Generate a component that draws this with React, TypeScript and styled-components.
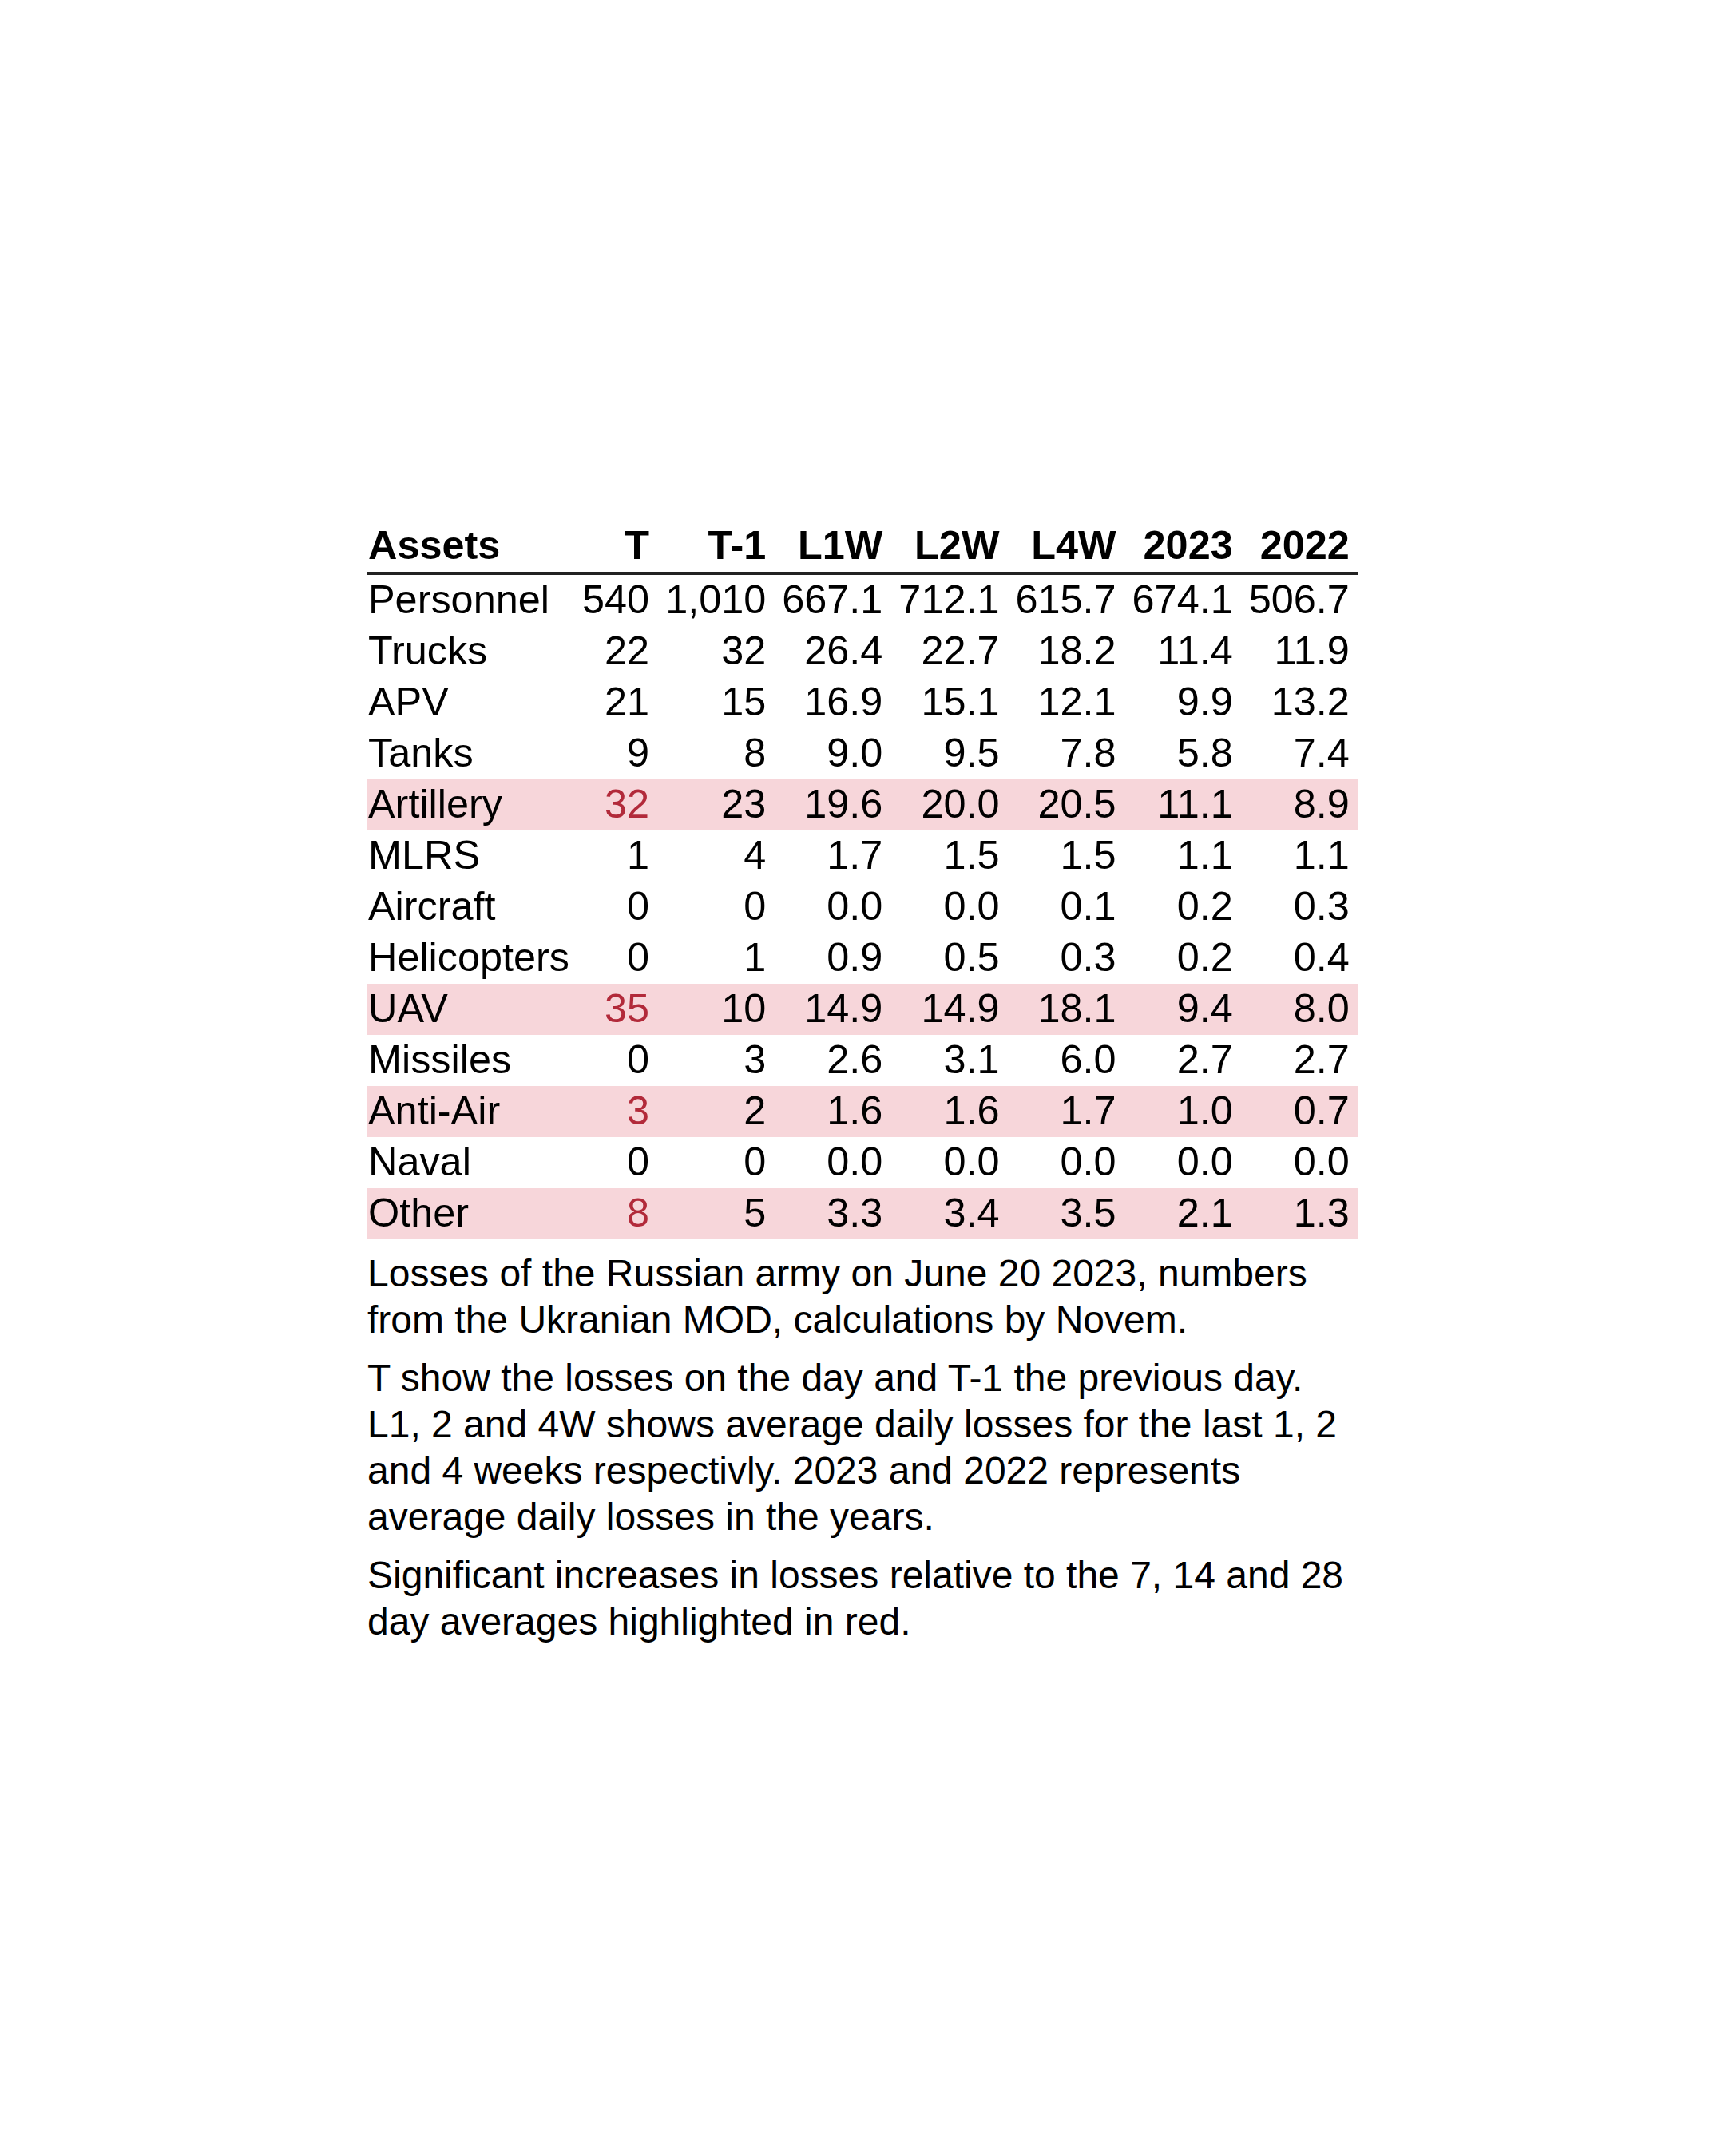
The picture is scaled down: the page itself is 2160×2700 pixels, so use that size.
import styled, { createGlobalStyle } from "styled-components";

const GlobalStyle = createGlobalStyle`
  html, body {
    margin: 0;
    padding: 0;
    background: #ffffff;
  }
  body {
    font-family: "Liberation Sans", Arial, sans-serif;
    color: #000000;
  }
`;

const Wrapper = styled.div`
  padding: 652px 0 0 460px;
  width: 1240px;
`;

const Table = styled.table`
  border-collapse: separate;
  border-spacing: 0;
  font-size: 50.4px;
`;

const HeadCell = styled.th<{ $first?: boolean }>`
  font-weight: 700;
  line-height: 61px;
  padding: 0 ${(p) => (p.$first ? "6px 3px 1px" : "10px 3px 10px")};
  text-align: ${(p) => (p.$first ? "left" : "right")};
  border-bottom: 4px solid #222222;
  white-space: nowrap;
`;

const Row = styled.tr<{ $hot?: boolean }>`
  background: ${(p) => (p.$hot ? "#f7d6da" : "transparent")};
`;

const Cell = styled.td<{ $first?: boolean; $red?: boolean }>`
  line-height: 61px;
  padding: 0 ${(p) => (p.$first ? "6px 3px 1px" : "10px 3px 10px")};
  text-align: ${(p) => (p.$first ? "left" : "right")};
  color: ${(p) => (p.$red ? "#b22a3a" : "#000000")};
  white-space: nowrap;
`;

const Notes = styled.div`
  padding-top: 14px;
  width: 1240px;
`;

const Note = styled.p`
  margin: 0 0 15px;
  font-size: 48px;
  line-height: 58px;
`;

type Asset = {
  name: string;
  values: string[];
  hot?: boolean;
};

const columns = ["T", "T-1", "L1W", "L2W", "L4W", "2023", "2022"];

const assets: Asset[] = [
  { name: "Personnel", values: ["540", "1,010", "667.1", "712.1", "615.7", "674.1", "506.7"] },
  { name: "Trucks", values: ["22", "32", "26.4", "22.7", "18.2", "11.4", "11.9"] },
  { name: "APV", values: ["21", "15", "16.9", "15.1", "12.1", "9.9", "13.2"] },
  { name: "Tanks", values: ["9", "8", "9.0", "9.5", "7.8", "5.8", "7.4"] },
  { name: "Artillery", values: ["32", "23", "19.6", "20.0", "20.5", "11.1", "8.9"], hot: true },
  { name: "MLRS", values: ["1", "4", "1.7", "1.5", "1.5", "1.1", "1.1"] },
  { name: "Aircraft", values: ["0", "0", "0.0", "0.0", "0.1", "0.2", "0.3"] },
  { name: "Helicopters", values: ["0", "1", "0.9", "0.5", "0.3", "0.2", "0.4"] },
  { name: "UAV", values: ["35", "10", "14.9", "14.9", "18.1", "9.4", "8.0"], hot: true },
  { name: "Missiles", values: ["0", "3", "2.6", "3.1", "6.0", "2.7", "2.7"] },
  { name: "Anti-Air", values: ["3", "2", "1.6", "1.6", "1.7", "1.0", "0.7"], hot: true },
  { name: "Naval", values: ["0", "0", "0.0", "0.0", "0.0", "0.0", "0.0"] },
  { name: "Other", values: ["8", "5", "3.3", "3.4", "3.5", "2.1", "1.3"], hot: true },
];

export default function App() {
  return (
    <>
      <GlobalStyle />
      <Wrapper>
        <Table>
          <thead>
            <tr>
              <HeadCell $first>Assets</HeadCell>
              {columns.map((c) => (
                <HeadCell key={c}>{c}</HeadCell>
              ))}
            </tr>
          </thead>
          <tbody>
            {assets.map((a) => (
              <Row key={a.name} $hot={a.hot}>
                <Cell $first>{a.name}</Cell>
                {a.values.map((v, i) => (
                  <Cell key={i} $red={a.hot && i === 0}>
                    {v}
                  </Cell>
                ))}
              </Row>
            ))}
          </tbody>
        </Table>
        <Notes>
          <Note>
            Losses of the Russian army on June 20 2023, numbers from the Ukranian MOD,
            calculations by Novem.
          </Note>
          <Note>
            T show the losses on the day and T-1 the previous day. L1, 2 and 4W shows
            average daily losses for the last 1, 2 and 4 weeks respectivly. 2023 and 2022
            represents average daily losses in the years.
          </Note>
          <Note>
            Significant increases in losses relative to the 7, 14 and 28 day averages
            highlighted in red.
          </Note>
        </Notes>
      </Wrapper>
    </>
  );
}
